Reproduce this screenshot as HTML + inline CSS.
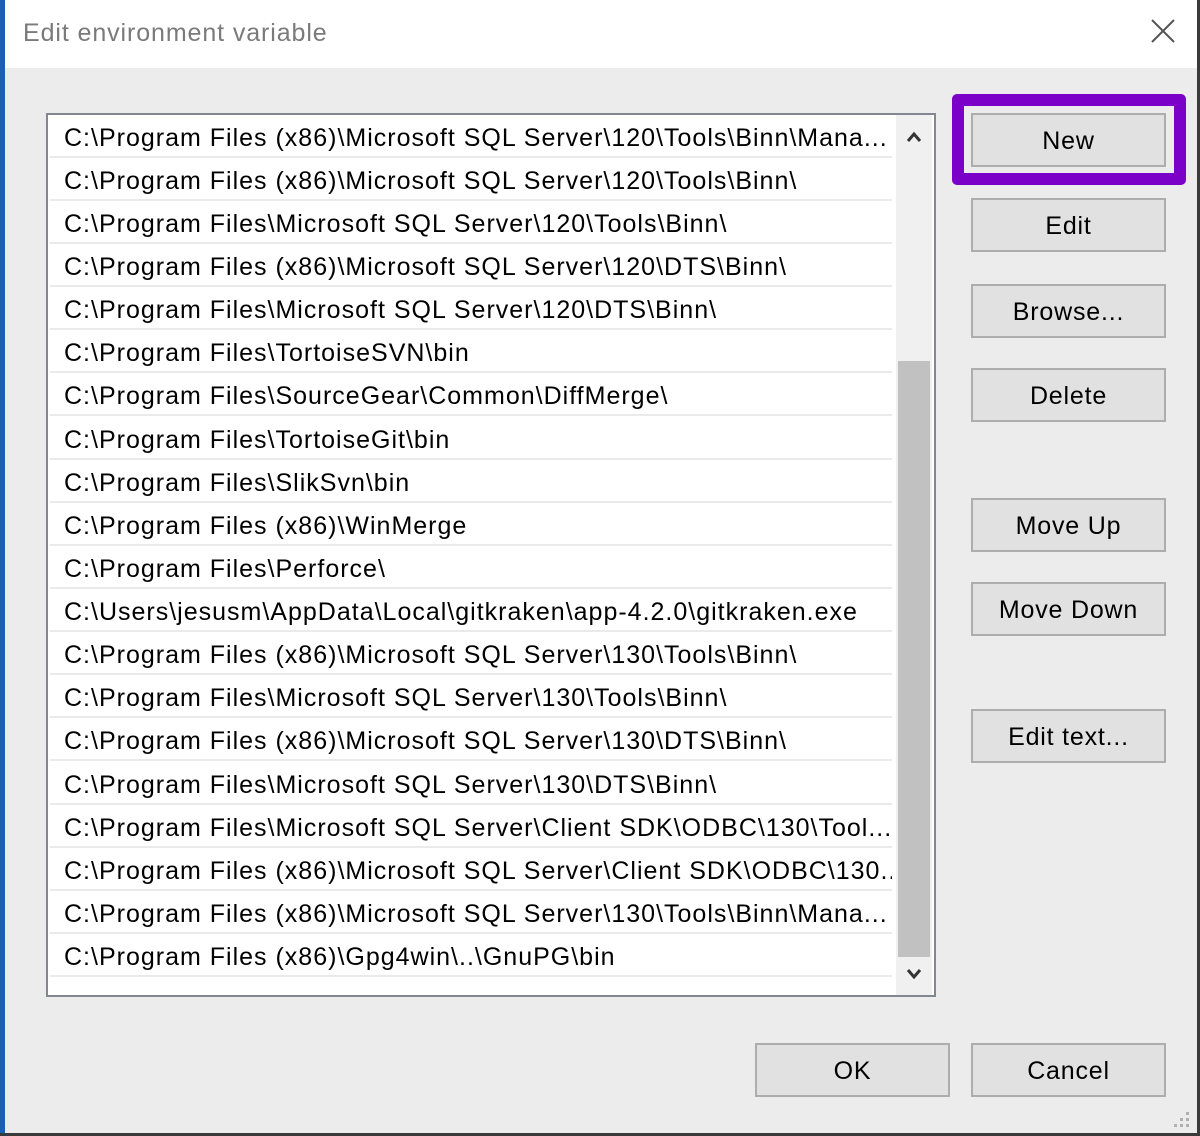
<!DOCTYPE html>
<html><head><style>
*{margin:0;padding:0;box-sizing:border-box}
body{width:1200px;height:1136px;background:#fff;font-family:"Liberation Sans",sans-serif;position:relative;overflow:hidden}
.lb{position:absolute;left:0;top:0;width:5px;height:1136px;background:#1a5fb4}
.rb{position:absolute;right:0;top:0;width:3px;height:1136px;background:#3a3a3a}
.bb{position:absolute;left:0;bottom:0;width:1200px;height:3px;background:#3a3a3a}
.title{position:absolute;left:23px;top:19px;font-size:25px;color:#7a7a7a;letter-spacing:0.9px}
.close{position:absolute;left:1150px;top:18px}
.body{position:absolute;left:5px;top:68px;width:1192px;height:1065px;background:#ececec}
.list{position:absolute;left:46px;top:113px;width:890px;height:884px;background:#fff;border:2px solid #828790;overflow:hidden}
.row{position:absolute;left:2px;width:842px;height:43px;border-bottom:2px solid #eaeaea;font-size:25px;line-height:41px;padding-top:3px;padding-left:14px;white-space:nowrap;overflow:hidden;color:#000;letter-spacing:1.0px}
.sb{position:absolute;left:848px;top:0;width:36px;height:880px;background:#f0f0f0}
.thumb{position:absolute;left:2px;top:246px;width:32px;height:596px;background:#c1c1c1}
.btn{position:absolute;width:195px;height:54px;background:#e1e1e1;border:2px solid #adadad;font-size:25px;text-align:center;line-height:52px;color:#000;letter-spacing:0.8px}
.hl{position:absolute;left:952px;top:94px;width:234px;height:91px;border:12px solid #7b00c8;border-radius:5px}
</style></head><body>
<div class="lb"></div>
<div class="title">Edit environment variable</div>
<svg class="close" width="26" height="26" viewBox="0 0 26 26"><path d="M2 2L24 24M24 2L2 24" stroke="#555" stroke-width="2"/></svg>
<div class="body"></div>
<div class="list">
<div class="row" style="top:0">C:\Program Files (x86)\Microsoft SQL Server\120\Tools\Binn\Mana...</div>
<div class="row" style="top:43px">C:\Program Files (x86)\Microsoft SQL Server\120\Tools\Binn\</div>
<div class="row" style="top:86px">C:\Program Files\Microsoft SQL Server\120\Tools\Binn\</div>
<div class="row" style="top:129px">C:\Program Files (x86)\Microsoft SQL Server\120\DTS\Binn\</div>
<div class="row" style="top:172px">C:\Program Files\Microsoft SQL Server\120\DTS\Binn\</div>
<div class="row" style="top:215px">C:\Program Files\TortoiseSVN\bin</div>
<div class="row" style="top:258px">C:\Program Files\SourceGear\Common\DiffMerge\</div>
<div class="row" style="top:302px">C:\Program Files\TortoiseGit\bin</div>
<div class="row" style="top:345px">C:\Program Files\SlikSvn\bin</div>
<div class="row" style="top:388px">C:\Program Files (x86)\WinMerge</div>
<div class="row" style="top:431px">C:\Program Files\Perforce\</div>
<div class="row" style="top:474px">C:\Users\jesusm\AppData\Local\gitkraken\app-4.2.0\gitkraken.exe</div>
<div class="row" style="top:517px">C:\Program Files (x86)\Microsoft SQL Server\130\Tools\Binn\</div>
<div class="row" style="top:560px">C:\Program Files\Microsoft SQL Server\130\Tools\Binn\</div>
<div class="row" style="top:603px">C:\Program Files (x86)\Microsoft SQL Server\130\DTS\Binn\</div>
<div class="row" style="top:647px">C:\Program Files\Microsoft SQL Server\130\DTS\Binn\</div>
<div class="row" style="top:690px">C:\Program Files\Microsoft SQL Server\Client SDK\ODBC\130\Tool...</div>
<div class="row" style="top:733px">C:\Program Files (x86)\Microsoft SQL Server\Client SDK\ODBC\130...</div>
<div class="row" style="top:776px">C:\Program Files (x86)\Microsoft SQL Server\130\Tools\Binn\Mana...</div>
<div class="row" style="top:819px">C:\Program Files (x86)\Gpg4win\..\GnuPG\bin</div>
<div class="sb"><div class="thumb"></div>
<svg style="position:absolute;left:10px;top:16px" width="16" height="12" viewBox="0 0 16 12"><path d="M2 10L8 3L14 10" stroke="#333" stroke-width="3" fill="none"/></svg>
<svg style="position:absolute;left:10px;top:853px" width="16" height="12" viewBox="0 0 16 12"><path d="M2 2L8 9L14 2" stroke="#333" stroke-width="3" fill="none"/></svg>
</div>
</div>
<div class="hl"></div>
<div class="btn" style="left:971px;top:113px">New</div>
<div class="btn" style="left:971px;top:198px">Edit</div>
<div class="btn" style="left:971px;top:284px">Browse...</div>
<div class="btn" style="left:971px;top:368px">Delete</div>
<div class="btn" style="left:971px;top:498px">Move Up</div>
<div class="btn" style="left:971px;top:582px">Move Down</div>
<div class="btn" style="left:971px;top:709px">Edit text...</div>
<div class="btn" style="left:755px;top:1043px">OK</div>
<div class="btn" style="left:971px;top:1043px">Cancel</div>
<svg style="position:absolute;left:1172px;top:1110px" width="20" height="20"><g fill="#b0b0b0"><rect x="14" y="2" width="3" height="3"/><rect x="8" y="8" width="3" height="3"/><rect x="14" y="8" width="3" height="3"/><rect x="2" y="14" width="3" height="3"/><rect x="8" y="14" width="3" height="3"/><rect x="14" y="14" width="3" height="3"/></g></svg>
<div class="rb"></div><div class="bb"></div>
</body></html>
